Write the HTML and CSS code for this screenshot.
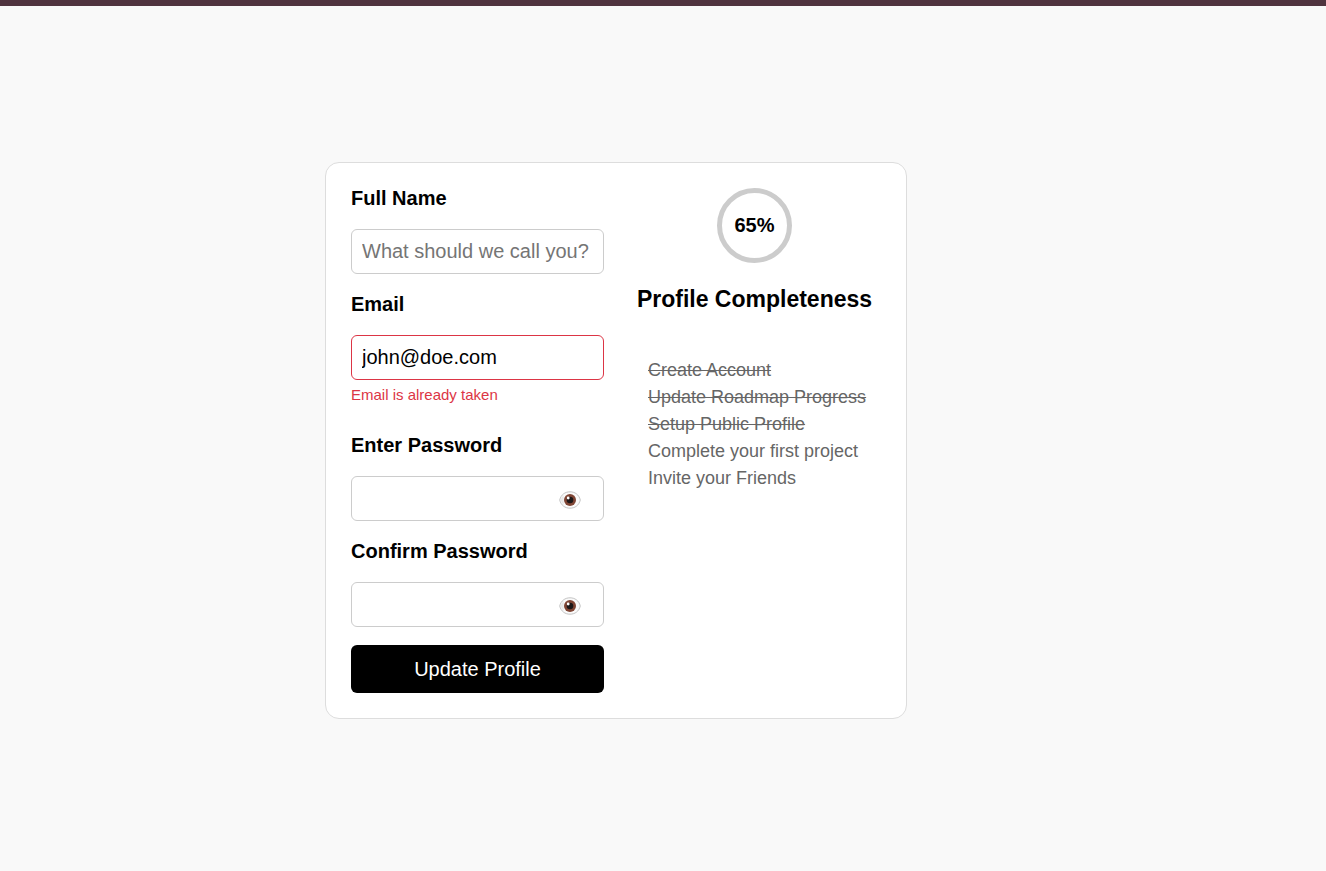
FILE: index.html
```html
<!DOCTYPE html>
<html lang="en">
<head>
<meta charset="utf-8">
<meta name="viewport" content="width=device-width, initial-scale=1">
<title>Update Profile</title>
<link rel="stylesheet" href="styles.css">
</head>
<body class="page">
<svg class="sprite" aria-hidden="true">
  <symbol id="eye" viewBox="0 0 22 18">
    <path d="M.7 9C2 3.700 6 .8 11 .8S20 3.700 21.300 9C20 14.300 16 17.200 11 17.200S2 14.300.7 9Z" fill="#fafafa" stroke="#b5b5b5" stroke-width=".8"/>
    <path d="M1.800 9c.5-2 1.500-3.500 2.800-4.700v9.400C3.300 12.500 2.300 11 1.800 9Z" fill="#e8e8e8"/>
    <circle cx="11" cy="9" r="6" fill="#7f4534"/>
    <circle cx="11" cy="9" r="3.300" fill="#1c1718"/>
    <circle cx="9.200" cy="7" r="1.400" fill="#fff"/>
  </symbol>
</svg>
<header class="topbar"></header>
<main class="main">
  <div class="card">
    <form class="form">
      <div class="field">
        <label class="label" for="name">Full Name</label>
        <input class="input" id="name" type="text" placeholder="What should we call you?">
      </div>
      <div class="field field-email">
        <label class="label" for="email">Email</label>
        <input class="input input-error" id="email" type="email" value="john@doe.com" aria-describedby="email-error">
        <p class="error" id="email-error">Email is already taken</p>
      </div>
      <div class="field">
        <label class="label" for="password">Enter Password</label>
        <div class="password">
          <input class="input" id="password" type="password">
          <button class="toggle" type="button" aria-label="Show password"><svg class="eye"><use href="#eye"/></svg></button>
        </div>
      </div>
      <div class="field">
        <label class="label" for="confirm">Confirm Password</label>
        <div class="password">
          <input class="input" id="confirm" type="password">
          <button class="toggle" type="button" aria-label="Show confirmed password"><svg class="eye"><use href="#eye"/></svg></button>
        </div>
      </div>
      <button class="submit" type="submit">Update Profile</button>
    </form>
    <section class="progress">
      <div class="ring">65%</div>
      <h2 class="title">Profile Completeness</h2>
      <ul class="steps">
        <li class="done">Create Account</li>
        <li class="done">Update Roadmap Progress</li>
        <li class="done">Setup Public Profile</li>
        <li>Complete your first project</li>
        <li>Invite your Friends</li>
      </ul>
    </section>
  </div>
</main>
</body>
</html>
```
FILE: styles.css
```css
* {
  box-sizing: border-box;
}

.page {
  display: flex;
  flex-direction: column;
  min-height: 100vh;
  margin: 0;
  background: #f9f9f9;
  color: #000;
  font-family: Arial, "Liberation Sans", sans-serif;
  font-size: 20px;
}

.sprite {
  position: absolute;
  width: 0;
  height: 0;
}

.topbar {
  height: 6px;
  background: #50343f;
}

.main {
  display: flex;
  flex: 1;
  align-items: center;
  justify-content: center;
  padding: 4px 94px 0 0;
}

.card {
  display: grid;
  grid-template-columns: 253px 253px;
  gap: 24px;
  padding: 24px 25px 25px;
  border: 1px solid #ddd;
  border-radius: 14px;
  background: #fff;
}

.form {
  display: flex;
  flex-direction: column;
}

.field {
  display: flex;
  flex-direction: column;
  margin-bottom: 19px;
}

.field-email {
  margin-bottom: 30px;
}

.label {
  margin-bottom: 19px;
  font-weight: bold;
  line-height: 23px;
}

.input {
  width: 100%;
  height: 45px;
  padding: 0 10px;
  border: 1px solid #ccc;
  border-radius: 6px;
  background: #fff;
  color: #000;
  font: inherit;
}

.input::placeholder {
  color: #757575;
}

.input-error {
  border-color: #dc3545;
}

.error {
  margin: 6px 0 1px;
  color: #dc3545;
  font-size: 15px;
  line-height: 17px;
}

.password {
  position: relative;
}

.toggle {
  position: absolute;
  top: 0;
  right: 23px;
  display: flex;
  align-items: center;
  height: 48px;
  padding: 0;
  border: 0;
  background: none;
  cursor: pointer;
}

.eye {
  width: 22px;
  height: 18px;
}

.submit {
  height: 48px;
  margin-top: -1px;
  border: 0;
  border-radius: 6px;
  background: #000;
  color: #fff;
  font: inherit;
  cursor: pointer;
}

.progress {
  display: flex;
  flex-direction: column;
  align-items: center;
  padding-top: 1px;
}

.ring {
  display: flex;
  align-items: center;
  justify-content: center;
  width: 75px;
  height: 75px;
  border: 5px solid #ccc;
  border-radius: 50%;
  font-weight: bold;
}

.title {
  margin: 23px 0 45px;
  font-size: 23px;
  line-height: 26px;
  white-space: nowrap;
}

.steps {
  width: 100%;
  margin: 0;
  padding: 0 0 0 20px;
  color: #666;
  font-size: 18px;
  line-height: 27px;
  list-style: none;
  white-space: nowrap;
}

.done {
  text-decoration: line-through;
}
```
